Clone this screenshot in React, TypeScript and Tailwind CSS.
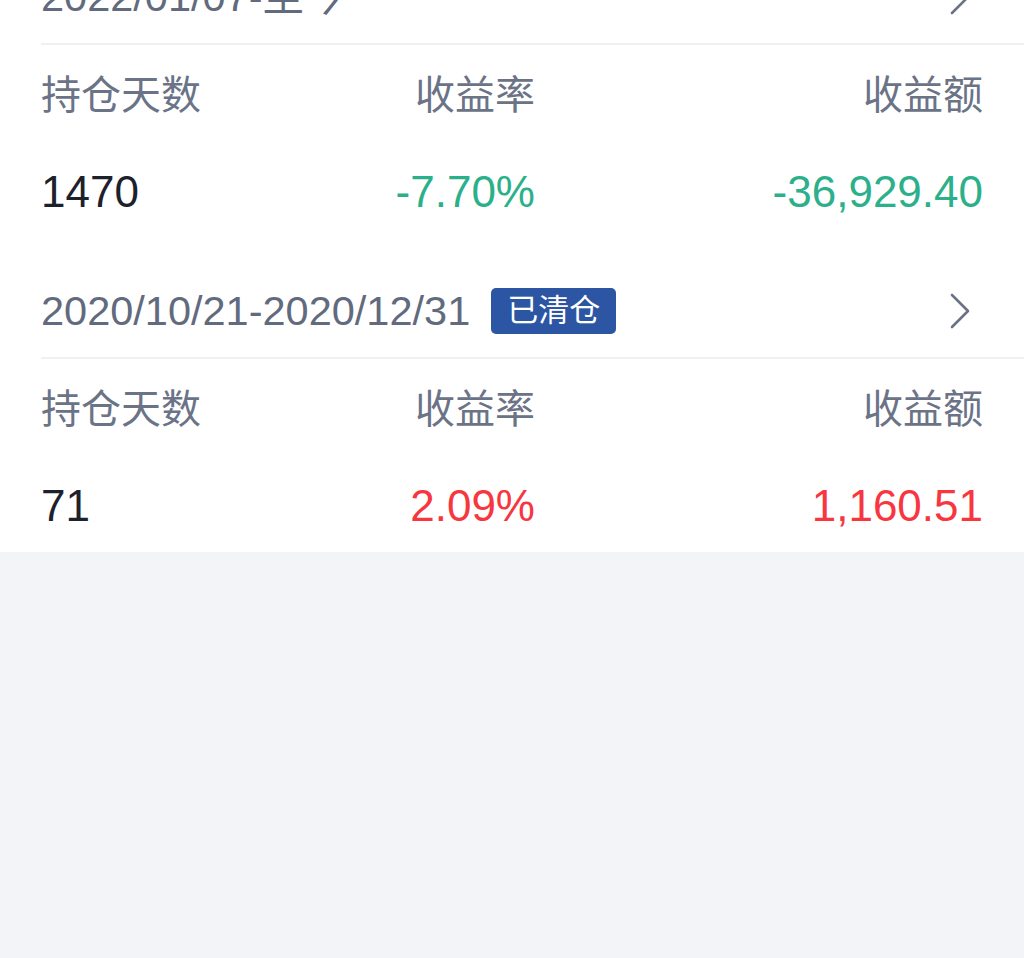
const font = { fontFamily: '"Helvetica Neue", "Liberation Sans", "Noto Sans CJK SC", sans-serif' };

type Holding = {
  range: string;
  cleared?: boolean;
  days: string;
  rate: string;
  amount: string;
  up: boolean;
};

const holdings: Holding[] = [
  { range: "2022/01/07-至今", days: "1470", rate: "-7.70%", amount: "-36,929.40", up: false },
  { range: "2020/10/21-2020/12/31", cleared: true, days: "71", rate: "2.09%", amount: "1,160.51", up: true },
];

function Chevron() {
  return (
    <svg width="22" height="36" viewBox="0 0 22 36" fill="none" className="shrink-0">
      <path d="M3 2 L19 18 L3 34" stroke="#6b7285" strokeWidth="2.6" strokeLinecap="round" strokeLinejoin="round" />
    </svg>
  );
}

function HoldingItem({ h }: { h: Holding }) {
  const color = h.up ? "text-[#f8363f]" : "text-[#2bb08b]";
  return (
    <div className="pt-[45px]">
      <div className="ml-[41px] flex items-center border-b-2 border-[#eef0f4] pb-[18px] pr-[53px]">
        <div className="flex flex-1 items-center">
          <span className="text-[41.5px] leading-[56px] text-[#626a7d]">{h.range}</span>
          {h.cleared && (
            <span className="ml-[21px] flex h-[46px] items-center rounded-[5px] bg-[#2c55a3] px-[16px] text-[31px] text-white">
              已清仓
            </span>
          )}
        </div>
        <Chevron />
      </div>
      <div className="flex px-[41px] pt-[22px] text-[40px] leading-[56px] text-[#6b7387]">
        <div className="w-[254px]">持仓天数</div>
        <div className="w-[240px] text-right">收益率</div>
        <div className="flex-1 text-right">收益额</div>
      </div>
      <div className="flex px-[41px] pt-[39px] pb-[16px] text-[44px] leading-[60px]">
        <div className="w-[254px] text-[#1d212c]">{h.days}</div>
        <div className={`w-[240px] text-right ${color}`}>{h.rate}</div>
        <div className={`flex-1 text-right ${color}`}>{h.amount}</div>
      </div>
    </div>
  );
}

export default function App() {
  return (
    <div className="h-[958px] overflow-hidden bg-[#f3f4f7]" style={font}>
      <div className="-mt-[76px] bg-white">
        {holdings.map((h) => (
          <HoldingItem key={h.range} h={h} />
        ))}
      </div>
    </div>
  );
}
